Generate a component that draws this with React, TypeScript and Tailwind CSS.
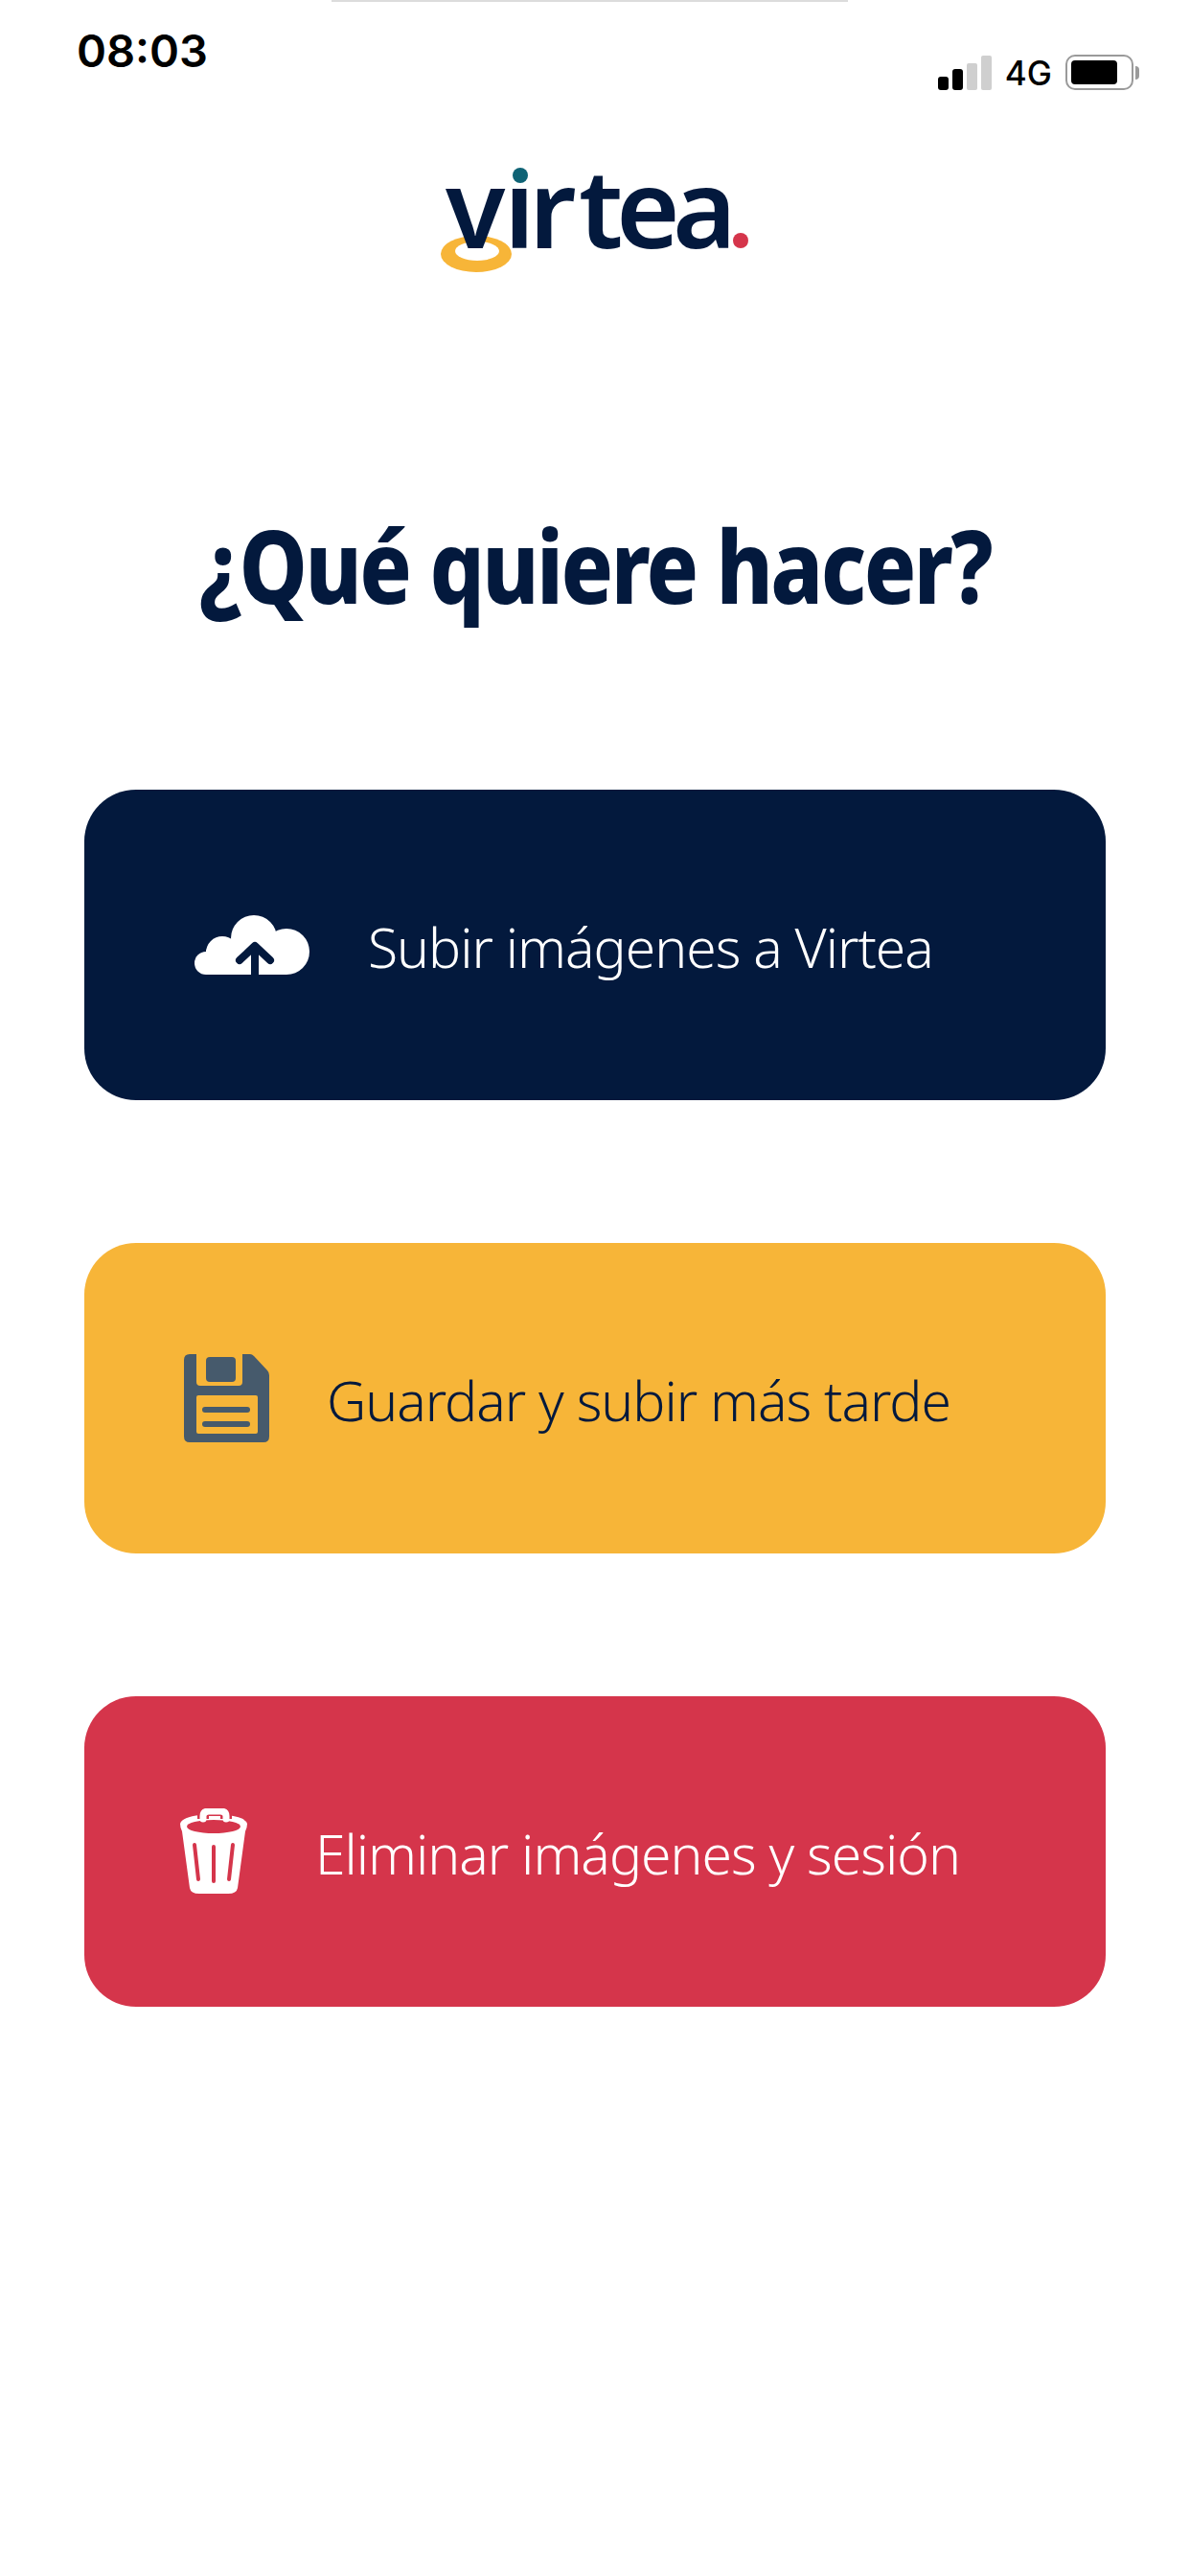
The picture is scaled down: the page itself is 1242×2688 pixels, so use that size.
function CloudIcon() {
  return (
    <svg width="120" height="62" viewBox="0 0 120 62" aria-hidden="true">
      <g fill="#fff">
        <circle cx="12" cy="50" r="12" />
        <circle cx="29" cy="39" r="17" />
        <circle cx="62" cy="24" r="24" />
        <circle cx="96" cy="38" r="24" />
        <rect x="12" y="36" width="84" height="26" />
      </g>
      <path d="M47 47 63 32 79 47M63 34V62" fill="none" stroke="#03193d" strokeWidth="8" strokeLinecap="round" strokeLinejoin="round" />
    </svg>
  );
}

function SaveIcon() {
  return (
    <svg width="89" height="92" viewBox="0 0 89 92" aria-hidden="true">
      <path d="M6 0H69Q71 0 73 2L87 17Q89 19 89 22V86Q89 92 83 92H6Q0 92 0 86V6Q0 0 6 0Z" fill="#465a6c" />
      <path d="M13 0H61V29Q61 33 57 33H17Q13 33 13 29Z" fill="#f7b538" />
      <rect x="23" y="3" width="31" height="26" rx="4" fill="#465a6c" />
      <rect x="13" y="43" width="64" height="40" rx="2" fill="#f7b538" />
      <rect x="19" y="55" width="50" height="6" rx="3" fill="#465a6c" />
      <rect x="19" y="70" width="50" height="6" rx="3" fill="#465a6c" />
    </svg>
  );
}

function TrashIcon() {
  return (
    <svg width="70" height="90" viewBox="0 0 70 90" aria-hidden="true">
      <path d="M0 16Q2 9 21 7H49Q68 9 70 16Q70 20 68 24L60 83Q59 89 50 89H20Q11 89 10 83L2 24Q0 20 0 16Z" fill="#fff" />
      <ellipse cx="35" cy="19" rx="28" ry="7" fill="#d5354b" />
      <path d="M24 11V8Q24 2 30 2H42Q48 2 48 8V11" fill="none" stroke="#d5354b" strokeWidth="12" />
      <path d="M24 11V8Q24 3 30 3H42Q48 3 48 8V11" fill="none" stroke="#fff" strokeWidth="7" strokeLinecap="round" />
      <path d="M15 38 19 74M35 40V76M55 38 51 74" fill="none" stroke="#d5354b" strokeWidth="4" strokeLinecap="round" />
    </svg>
  );
}

function Logo() {
  return (
    <svg width="362" height="160" viewBox="0 0 362 160" aria-hidden="true">
      <ellipse cx="57" cy="130" rx="37" ry="19" fill="#f7b538" />
      <ellipse cx="58" cy="127" rx="23" ry="10" fill="#fff" />
      <text x="25 86 112 164 203 262" y="124" fill="#03193d" fontSize="114" fontWeight="600" fontFamily="'Noto Sans', sans-serif">virtea</text>
      <circle cx="102" cy="43" r="14" fill="#fff" />
      <circle cx="103" cy="48" r="8" fill="#0f6375" />
      <circle cx="333" cy="116" r="8" fill="#d5354b" />
    </svg>
  );
}

function ActionButton({ bg, text, pad, gap, icon, label }: { bg: string; text: string; pad: string; gap: string; icon: React.ReactNode; label: string }) {
  return (
    <button type="button" className={`flex h-[324px] w-full items-center rounded-[54px] text-[57px] font-light tracking-[-1px] ${bg} ${text} ${pad} ${gap}`}>
      {icon}
      <span className="mt-[6px]">{label}</span>
    </button>
  );
}

export default function App() {
  return (
    <div className="relative min-h-[2688px] w-[1242px] bg-white font-['Noto_Sans',sans-serif]">
      <div className="absolute left-[346px] top-0 h-[2px] w-[539px] bg-[#dcdcdc]" />

      {/* Status bar */}
      <div className="flex h-[100px] items-start justify-between pl-[80px] pr-[53px]">
        <span className="mt-[24px] font-['Inter',sans-serif] text-[47px] font-semibold leading-[58px] text-black">08:03</span>
        <div className="mt-[57px] flex items-end gap-[14px]">
          <div className="flex h-[36px] items-end gap-[4px]">
            <div className="h-[14px] w-[11px] rounded-[3px] bg-black" />
            <div className="h-[22px] w-[11px] rounded-[3px] bg-black" />
            <div className="h-[28px] w-[11px] rounded-[2px] bg-[#cfcfcf]" />
            <div className="h-[36px] w-[11px] rounded-[2px] bg-[#cfcfcf]" />
          </div>
          <span className="font-['Inter',sans-serif] text-[35px] font-medium leading-[36px] text-black">4G</span>
          <div className="flex items-center gap-[2px]">
            <div className="flex h-[37px] w-[71px] items-center rounded-[10px] border-2 border-[#9a9a9a] p-[4px]">
              <div className="h-full w-[48px] rounded-[4px] bg-black" />
            </div>
            <div className="h-[14px] w-[4px] rounded-r-full bg-[#9a9a9a]" />
          </div>
        </div>
      </div>

      {/* Logo */}
      <div className="mt-[35px] flex justify-center">
        <Logo />
      </div>

      <h1 className="mt-[229px] scale-x-[0.85] whitespace-nowrap text-center text-[106px] font-extrabold leading-[130px] tracking-[-3px] text-[#03193d]">¿Qué quiere hacer?</h1>

      <div className="mt-[170px] flex flex-col gap-[149px] px-[88px]">
        <ActionButton bg="bg-[#03193d]" text="text-white" pad="pl-[115px]" gap="gap-[61px]" icon={<CloudIcon />} label="Subir imágenes a Virtea" />
        <ActionButton bg="bg-[#f7b538]" text="text-[#03193d]" pad="pl-[104px]" gap="gap-[60px]" icon={<SaveIcon />} label="Guardar y subir más tarde" />
        <ActionButton bg="bg-[#d5354b]" text="text-white" pad="pl-[100px]" gap="gap-[71px]" icon={<TrashIcon />} label="Eliminar imágenes y sesión" />
      </div>
    </div>
  );
}
